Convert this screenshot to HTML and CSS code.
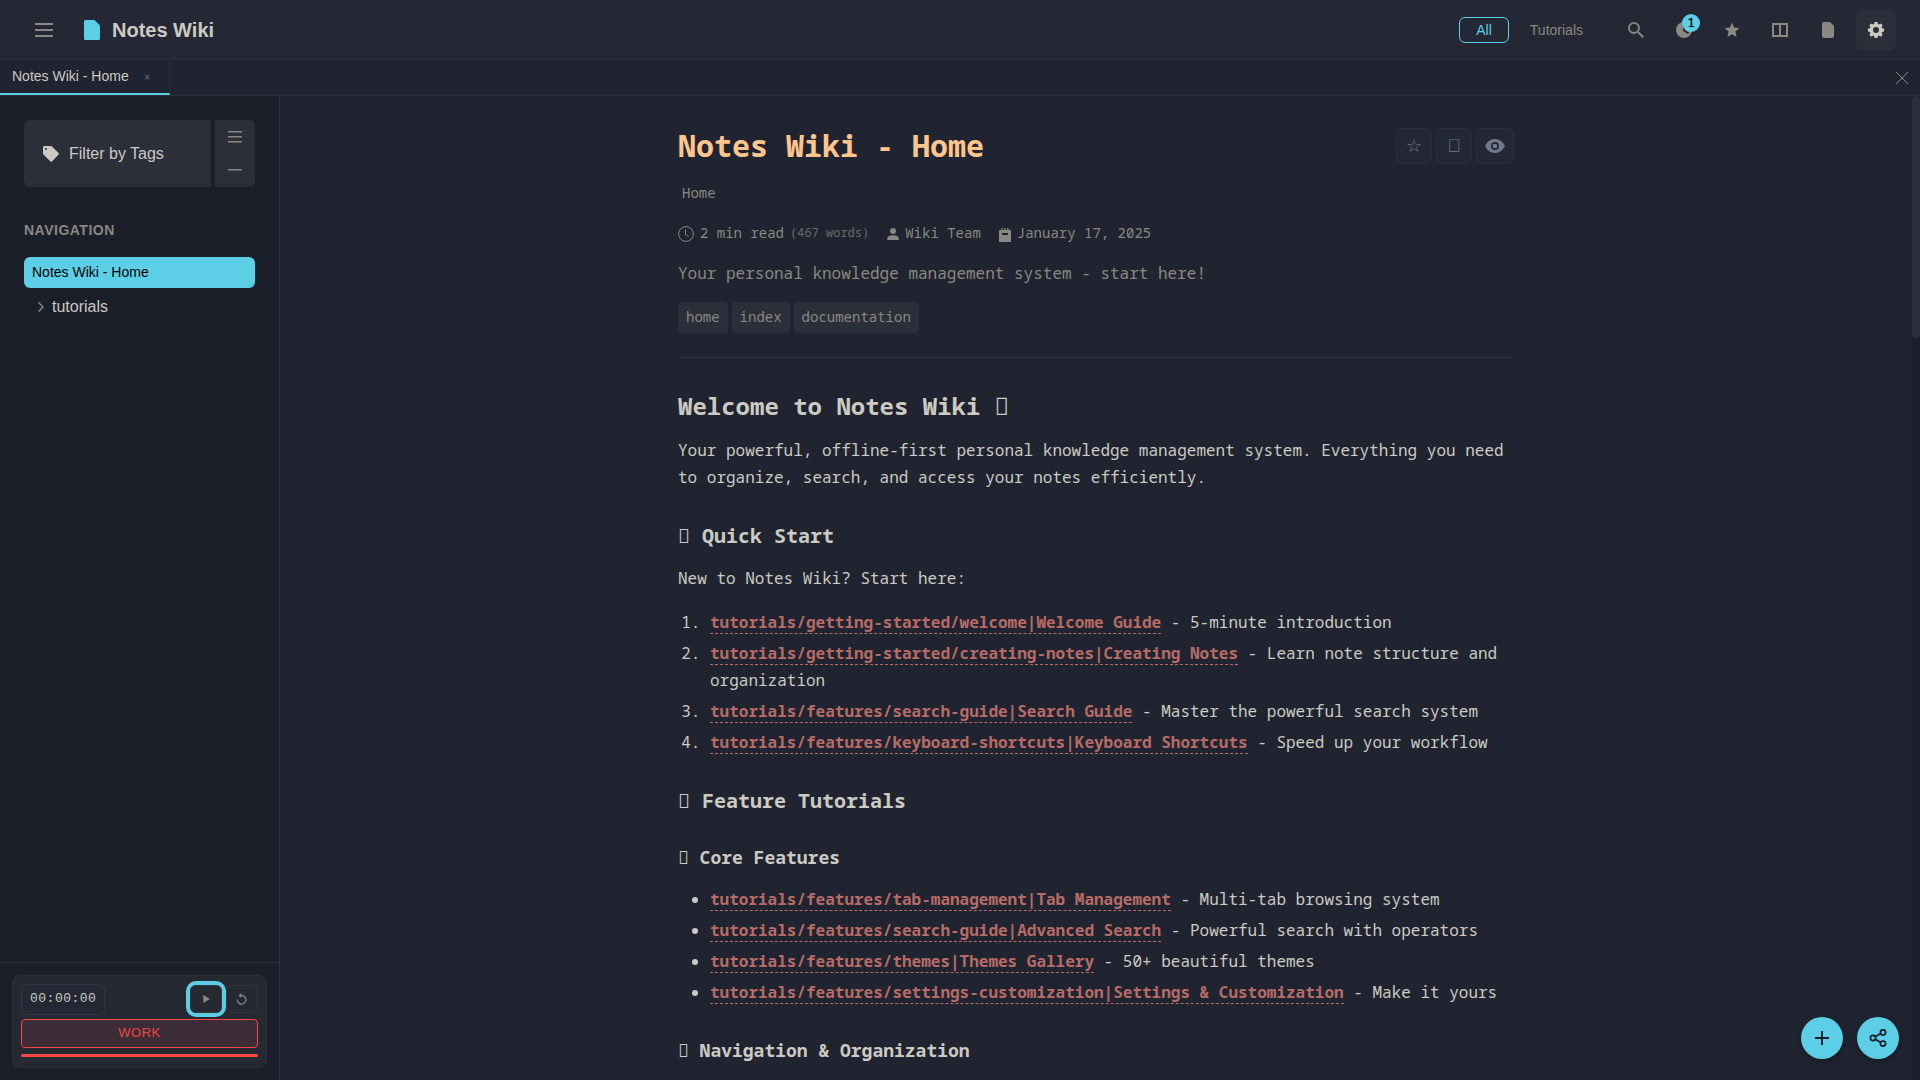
FILE: index.html
```html
<!DOCTYPE html>
<html lang="en">
<head>
<meta charset="utf-8">
<title>Notes Wiki - Home</title>
<link rel="stylesheet" href="styles.css">
</head>
<body>
<header class="topbar">
  <button class="menu-btn" aria-label="Menu"><svg width="18" height="14" viewBox="0 0 18 14"><path d="M0 0h18v2H0zM0 6h18v2H0zM0 12h18v2H0z"/></svg></button>
  <div class="brand">
    <svg class="brand-icon" width="16" height="20" viewBox="0 0 16 20"><path d="M1.500 0H10.500L16 5.500V18.500Q16 20 14.500 20H1.500Q0 20 0 18.500V1.500Q0 0 1.500 0z"/></svg>
    <span>Notes Wiki</span>
  </div>
  <nav class="contexts"><button class="context active">All</button><button class="context">Tutorials</button></nav>
  <div class="tools">
    <button class="tool"><svg width="16" height="16" viewBox="3 3 17.490 17.490"><path d="M15.500 14h-.79l-.28-.27A6.470 6.470 0 0 0 16 9.500 6.500 6.500 0 1 0 9.500 16c1.610 0 3.090-.59 4.230-1.570l.27.28v.79l5 4.990L20.490 19zm-6 0C7.010 14 5 11.990 5 9.500S7.010 5 9.500 5 14 7.010 14 9.500 11.990 14 9.500 14z"/></svg></button>
    <button class="tool"><svg width="16" height="16" viewBox="0 0 16 16"><path fill-rule="evenodd" d="M8 0a8 8 0 1 0 0 16A8 8 0 0 0 8 0zM7 3h2v5l4 2.500-1 1.500-5-3z"/></svg><span class="badge">1</span></button>
    <button class="tool"><svg width="16" height="16" viewBox="0 0 16 16"><path d="M8 .4l2.100 5.200 5.500.4-4.200 3.600 1.300 5.500L8 12.200l-4.700 2.900 1.300-5.500L.4 6l5.500-.4z"/></svg></button>
    <button class="tool"><svg width="16" height="14" viewBox="0 0 16 14"><path fill-rule="evenodd" d="M0 0h16v14H0zM2 2v10h5V2zM9 2v10h5V2z"/></svg></button>
    <button class="tool"><svg width="12" height="16" viewBox="0 0 12 16"><path d="M2 0H8L12 4V14Q12 16 10 16H2Q0 16 0 14V2Q0 0 2 0z"/></svg></button>
    <button class="tool on"><svg width="16" height="16" viewBox="0 0 16 16"><path fill-rule="evenodd" d="M6.600 0h2.800l.5 2.100 1 .4 1.900-1.100 1.900 1.900-1.100 1.900.4 1 2 .4v2.800l-2 .5-.4 1 1.100 1.900-1.900 1.900-1.900-1.100-1 .4-.5 2H6.600l-.5-2-1-.4-1.900 1.100-1.900-1.900 1.100-1.900-.4-1-2-.5V6.600l2-.4.4-1-1.100-1.900 1.900-1.900 1.900 1.100 1-.4zM8 5a3 3 0 1 0 0 6 3 3 0 0 0 0-6z"/></svg></button>
  </div>
</header>
<div class="tabs">
  <div class="tab"><span class="tab-name">Notes Wiki - Home</span><span class="tab-x">×</span></div>
  <button class="close-all" aria-label="Close"><svg width="12" height="12" viewBox="0 0 12 12"><path d="M0 0l12 12M12 0L0 12"/></svg></button>
</div>
<div class="body">
  <aside class="sidebar">
    <div class="side-scroll">
      <div class="filter">
        <button class="filter-main"><svg width="16" height="16" viewBox="0 0 16 16"><path fill-rule="evenodd" d="M1.500 0H8q.6 0 1 .4l6.600 6.600q.7.8 0 1.500L9 15.600q-.8.700-1.500 0L.4 8.500Q0 8 0 7.500V1.500Q0 0 1.500 0zM3 2a1 1 0 1 0 0 2 1 1 0 0 0 0-2z"/></svg><span>Filter by Tags</span></button>
        <div class="filter-side">
          <button><svg width="14" height="12" viewBox="0 0 14 12"><path d="M0 .75h14M0 5.750h14M0 10.750h14"/></svg></button>
          <button><svg width="14" height="2" viewBox="0 0 14 2"><path d="M0 .75h14"/></svg></button>
        </div>
      </div>
      <h2 class="side-title">NAVIGATION</h2>
      <a class="nav-item">Notes Wiki - Home</a>
      <a class="nav-folder"><svg width="6" height="10" viewBox="0 0 6 10"><path d="M.6.5L5 5 .6 9.500"/></svg><span>tutorials</span></a>
    </div>
    <div class="timer-wrap">
      <div class="timer">
        <div class="timer-row">
          <div class="clock">00:00:00</div>
          <button class="tbtn play"><svg width="7" height="8" viewBox="0 0 7 8"><path d="M.3 0L6.800 4 .3 8z"/></svg></button>
          <button class="tbtn"><svg class="reset" width="12" height="12" viewBox="0 0 12 12"><path d="M5 2.500A4.300 4.300 0 1 1 1.300 6.500"/><path class="head" d="M5.300 0v5L2.500 2.500z"/></svg></button>
        </div>
        <div class="mode">WORK</div>
        <div class="progress"></div>
      </div>
    </div>
  </aside>
  <main class="content">
    <article class="note">
      <div class="title-row">
        <h1>Notes Wiki - Home</h1>
        <div class="actions">
          <button class="act">☆</button><button class="act">&#xF0001;</button><button class="act wide"><svg width="20" height="14" viewBox="0 0 20 14"><path fill-rule="evenodd" d="M10 0C5.500 0 1.700 2.900.2 7c1.500 4.100 5.300 7 9.800 7s8.300-2.900 9.800-7C18.300 2.900 14.500 0 10 0zm0 3a4 4 0 1 1 0 8 4 4 0 0 1 0-8z"/><circle cx="10" cy="7" r="2.300"/></svg></button>
        </div>
      </div>
      <div class="crumb">Home</div>
      <div class="meta">
        <span class="m"><svg class="line" width="16" height="16" viewBox="0 0 16 16"><circle cx="8" cy="8" r="7.400"/><path d="M7.500 3.500v5l3.200 2"/></svg>2 min read</span><span class="words">(467 words)</span>
        <span class="m author"><svg width="12" height="12" viewBox="0 0 12 12"><circle cx="6" cy="3" r="3"/><path d="M6 7.300c3 0 5.700 1.200 5.700 3.200V12H.3v-1.500c0-2 2.700-3.200 5.700-3.200z"/></svg>Wiki Team</span>
        <span class="m date"><svg width="12" height="14" viewBox="0 0 12 14"><path fill-rule="evenodd" d="M2.500 0h1.300v2h1.500V0h1.400v2h1.500V0h1.300v2H11q1 0 1 1V14H0V3q0-1 1-1h1.500zM3 5v2h6V5z"/></svg>January 17, 2025</span>
      </div>
      <p class="desc">Your personal knowledge management system - start here!</p>
      <div class="tags"><span>home</span><span>index</span><span>documentation</span></div>
      <section class="prose">
        <h2>Welcome to Notes Wiki &#xF0001;</h2>
        <p>Your powerful, offline-first personal knowledge management system. Everything you need to organize, search, and access your notes efficiently.</p>
        <h3>&#xF0001; Quick Start</h3>
        <p>New to Notes Wiki? Start here:</p>
        <ol>
          <li><a>tutorials/getting-started/welcome|Welcome Guide</a> - 5-minute introduction</li>
          <li><a>tutorials/getting-started/creating-notes|Creating Notes</a> - Learn note structure and organization</li>
          <li><a>tutorials/features/search-guide|Search Guide</a> - Master the powerful search system</li>
          <li><a>tutorials/features/keyboard-shortcuts|Keyboard Shortcuts</a> - Speed up your workflow</li>
        </ol>
        <h3>&#xF0001; Feature Tutorials</h3>
        <h4>&#xF0001; Core Features</h4>
        <ul>
          <li><a>tutorials/features/tab-management|Tab Management</a> - Multi-tab browsing system</li>
          <li><a>tutorials/features/search-guide|Advanced Search</a> - Powerful search with operators</li>
          <li><a>tutorials/features/themes|Themes Gallery</a> - 50+ beautiful themes</li>
          <li><a>tutorials/features/settings-customization|Settings &amp; Customization</a> - Make it yours</li>
        </ul>
        <h4>&#xF0001; Navigation &amp; Organization</h4>
      </section>
    </article>
    <div class="scrollbar"><div class="thumb"></div></div>
  </main>
</div>
<div class="fabs">
  <button class="fab"><svg width="14" height="14" viewBox="0 0 14 14"><path d="M7 0v14M0 7h14"/></svg></button>
  <button class="fab share"><svg width="18" height="18" viewBox="0 0 18 18"><circle cx="4" cy="9" r="2.600"/><circle cx="14" cy="3.400" r="2.600"/><circle cx="14" cy="14.600" r="2.600"/><path d="M6.300 7.700l5.400-3.100M6.300 10.300l5.400 3.100"/></svg></button>
</div>
</body>
</html>
```
FILE: styles.css
```css
:root {
  --bg: #1f2430;
  --panel: #242834;
  --side: #1b1f29;
  --raised: #2b2f3a;
  --line: #2b2f3a;
  --text: #cccac2;
  --muted: #8a8880;
  --accent: #5ccfe6;
  --mono: "Noto Sans Mono", "Noto Sans", monospace;
}
* { box-sizing: border-box; }
body {
  margin: 0;
  height: 1080px;
  display: flex;
  flex-direction: column;
  overflow: hidden;
  background: var(--bg);
  color: var(--text);
  font: 14px "Liberation Sans", Arial, sans-serif;
}
button {
  margin: 0;
  padding: 0;
  border: 0;
  background: none;
  color: inherit;
  font: inherit;
  display: flex;
  align-items: center;
  justify-content: center;
}
svg { display: block; flex: none; fill: currentColor; }

.topbar {
  height: 60px;
  flex: none;
  display: flex;
  align-items: center;
  padding: 0 24px;
  background: var(--panel);
  border-bottom: 1px solid var(--line);
}
.menu-btn { width: 40px; height: 40px; color: var(--muted); }
.menu-btn, .tool { margin-top: 1px; }
.brand {
  display: flex;
  align-items: center;
  gap: 12px;
  margin-left: 20px;
  font-size: 20px;
  font-weight: 700;
}
.brand span { padding-top: 2px; }
.brand-icon { color: var(--accent); margin-top: 1px; }
.contexts { display: flex; gap: 4px; margin: 1px 16px 0 auto; }
.context {
  height: 26px;
  padding: 0 16px;
  border: 1px solid transparent;
  border-radius: 6px;
  color: var(--muted);
}
.context.active { color: var(--accent); border-color: var(--accent); }
.tools { display: flex; gap: 8px; }
.tool { position: relative; width: 40px; height: 40px; border-radius: 6px; color: var(--muted); }
.tool.on { background: var(--raised); color: var(--text); }
.badge {
  position: absolute;
  top: 4px;
  right: 4px;
  width: 18px;
  height: 18px;
  border-radius: 50%;
  background: var(--accent);
  color: #000;
  font: 600 12px/18px var(--mono);
  text-align: center;
}

.tabs {
  height: 36px;
  flex: none;
  display: flex;
  justify-content: space-between;
  border-bottom: 1px solid var(--line);
}
.tab {
  width: 170px;
  display: flex;
  align-items: center;
  padding: 0 19px 0 12px;
  justify-content: space-between;
  border-right: 1px solid var(--line);
  border-bottom: 2px solid var(--accent);
}
.tab-name { padding-bottom: 2px; }
.tab-x { padding-top: 1px; color: #707a8c; font-size: 10px; }
.close-all { width: 36px; padding-top: 1px; color: var(--muted); }
.close-all svg { fill: none; stroke: currentColor; }

.body { flex: 1; min-height: 0; display: flex; }
.sidebar {
  width: 280px;
  flex: none;
  display: flex;
  flex-direction: column;
  background: var(--side);
  border-right: 1px solid var(--line);
}
.side-scroll { flex: 1; padding: 24px; }
.filter { display: flex; gap: 4px; height: 67px; font-size: 16px; }
.filter-main {
  flex: 1;
  justify-content: flex-start;
  gap: 10px;
  padding: 1px 19px 0;
  background: var(--raised);
  border-radius: 6px 0 0 6px;
}
.filter-side {
  width: 40px;
  display: flex;
  flex-direction: column;
  background: var(--raised);
  border-radius: 0 6px 6px 0;
  color: var(--muted);
}
.filter-side button { flex: 1; }
.filter-side svg { stroke: currentColor; stroke-width: 1.500; }
.side-title {
  margin: 34px 0 0;
  font-size: 14px;
  line-height: 18px;
  letter-spacing: .5px;
  color: var(--muted);
}
.nav-item {
  display: block;
  margin-top: 18px;
  height: 31px;
  padding: 0 8px;
  line-height: 30px;
  border-radius: 6px;
  background: var(--accent);
  color: #000;
}
.nav-folder {
  display: flex;
  align-items: center;
  gap: 8px;
  height: 38px;
  padding-left: 14px;
  font-size: 16px;
}
.nav-folder svg { fill: none; stroke: var(--muted); stroke-width: 1.500; }

.timer-wrap { border-top: 1px solid var(--line); padding: 12px; }
.timer {
  height: 93px;
  padding: 8px;
  background: #242932;
  border: 1px solid var(--line);
  border-radius: 8px;
}
.timer-row { display: flex; align-items: center; gap: 4px; height: 31px; }
.clock {
  width: 84px;
  height: 31px;
  margin-right: auto;
  padding-left: 8px;
  line-height: 28px;
  border: 1px solid #323642;
  border-radius: 6px;
  background: var(--panel);
  font-family: "Liberation Mono", monospace;
  font-size: 13px;
  letter-spacing: .5px;
}
.tbtn {
  width: 32px;
  height: 28px;
  margin-bottom: 2px;
  border: 1px solid #323642;
  border-radius: 6px;
  color: var(--muted);
}
.tbtn.play {
  outline: 2px solid var(--accent);
  outline-offset: 2px;
  box-shadow: 0 0 0 3px var(--accent);
}
.tbtn .reset { fill: none; stroke: currentColor; stroke-width: 1.300; }
.tbtn .head { fill: currentColor; stroke: none; }
.mode {
  height: 29px;
  margin-top: 4px;
  line-height: 25px;
  text-align: center;
  border: 1px solid #f44;
  border-radius: 4px;
  background: #3b2c35;
  color: #ef4446;
  font-size: 13px;
  letter-spacing: .5px;
}
.progress { height: 3px; margin-top: 6px; border-radius: 2px; background: #f44; }

.content { flex: 1; display: flex; justify-content: space-between; overflow: hidden; }
.note {
  width: 836px;
  margin: 0 auto;
  padding-top: 32px;
  font-family: var(--mono);
}
.title-row { display: flex; justify-content: space-between; height: 36px; }
h1 { margin: 0; font-size: 30px; line-height: 36px; color: #ffc58c; }
.actions { display: flex; gap: 4px; }
.act {
  width: 36px;
  height: 36px;
  background: var(--panel);
  border: 1px solid var(--line);
  border-radius: 6px;
  color: #707a8c;
  font-family: "Liberation Sans", Arial, sans-serif;
  font-size: 18px;
}
.act.wide { width: 38px; }
.crumb { margin-top: 17px; padding-left: 4px; line-height: 24px; color: var(--muted); }
.meta { display: flex; align-items: center; height: 24px; margin-top: 15px; color: var(--muted); }
.m { display: flex; align-items: center; gap: 6px; }
.m svg { margin-top: 4px; }
.m.date svg { margin-top: 5px; }
.line { fill: none; stroke: currentColor; }
.words { margin-left: 6px; font-size: 12px; opacity: .7; }
.author { margin-left: 18px; }
.date { margin-left: 18px; }
.desc { margin: 16px 0 0; font-size: 16px; line-height: 27px; color: var(--muted); }
.tags { display: flex; gap: 4px; margin-top: 15px; }
.tags span {
  height: 31px;
  padding: 0 8px;
  line-height: 29px;
  border-radius: 4px;
  background: var(--raised);
  color: var(--muted);
}
.prose {
  margin-top: 24px;
  border-top: 1px solid var(--line);
  padding-top: 34.200px;
  font-size: 16px;
  line-height: 27.200px;
}
.prose h2 { margin: 0 0 16px; font-size: 24px; line-height: 28.800px; }
.prose h3 { margin: 32px 0 16px; font-size: 20px; line-height: 26px; }
.prose ol + h3 { margin-top: 31.800px; }
.prose h4 { margin: 32px 0 16px; font-size: 18px; line-height: 23.400px; }
.prose p { margin: 16px 0; }
.prose ol, .prose ul { margin: 16px 0; padding-left: 32px; }
.prose li { margin-bottom: 4px; }
.prose a { color: #b86b66; font-weight: 700; border-bottom: 1px dashed #b86b66; }

.scrollbar { width: 8px; background: var(--side); }
.thumb { height: 242px; border-radius: 4px; background: var(--raised); }

.fabs { position: absolute; right: 21px; bottom: 21px; display: flex; gap: 14px; }
.fab {
  width: 42px;
  height: 42px;
  border-radius: 50%;
  background: var(--accent);
  color: #1a1f29;
  box-shadow: 0 2px 8px rgba(0, 0, 0, .3);
}
.fab svg { fill: none; stroke: currentColor; stroke-width: 2; }
.fab.share svg { stroke-width: 1.700; }
```
